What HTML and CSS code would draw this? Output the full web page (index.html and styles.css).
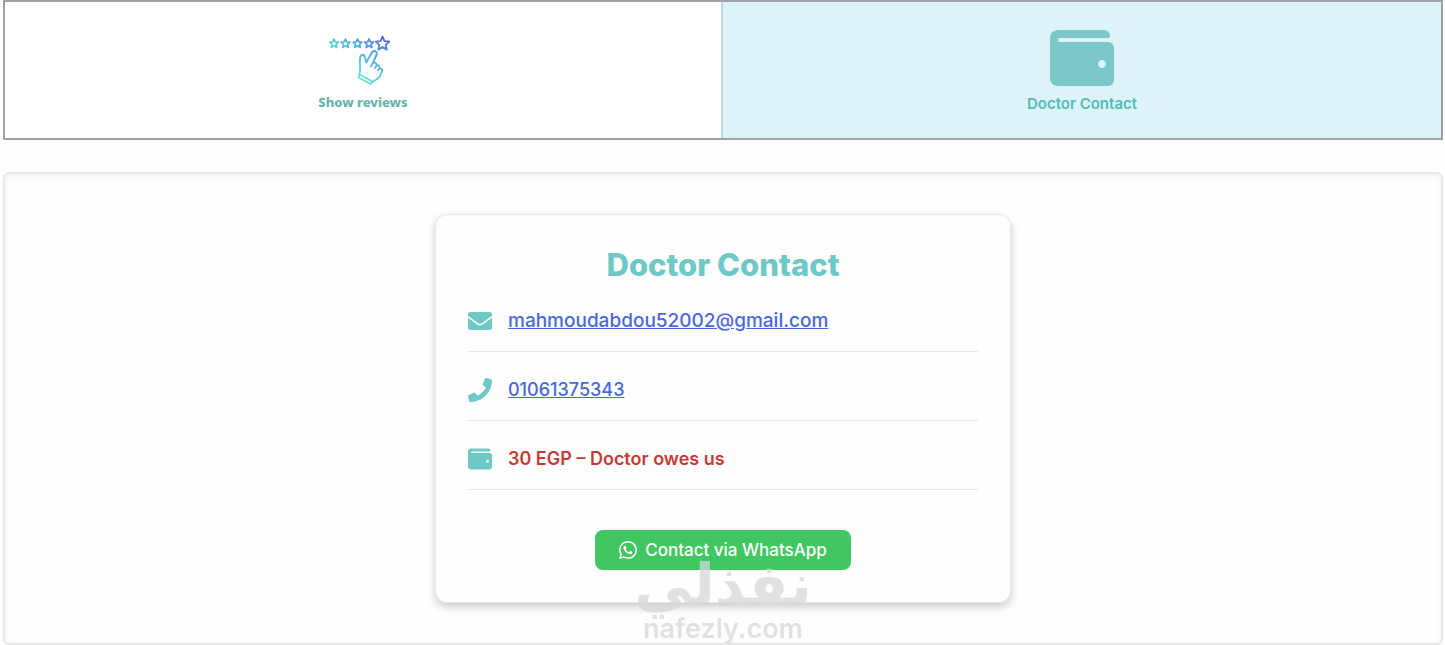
FILE: index.html
```html
<!DOCTYPE html>
<html lang="en">
<head>
    <meta charset="UTF-8">
    <meta name="viewport" content="width=device-width, initial-scale=1.0">
    <title>Doctor Contact</title>
    <link rel="stylesheet" href="styles.css">
</head>
<body>
    <nav class="tabs">
        <button type="button" class="tab tab-reviews">
            <svg class="tab-icon" viewBox="2 0 64 64" fill="none" stroke="url(#reviewGradient)" stroke-linejoin="round" stroke-linecap="round" aria-hidden="true">
                <defs>
                    <linearGradient id="reviewGradient" gradientUnits="userSpaceOnUse" x1="56" y1="10" x2="24" y2="50">
                        <stop offset="0" stop-color="#4a63dc"/>
                        <stop offset="0.5" stop-color="#55b4dc"/>
                        <stop offset="1" stop-color="#6aeed0"/>
                    </linearGradient>
                </defs>
                <path stroke-width="1.7" d="M5 11 6.3 13.9 9.4 14.2 7.1 16.3 7.8 19.4 5 17.8 2.2 19.4 2.9 16.3.6 14.2 3.7 13.9Z"/>
                <path stroke-width="1.7" d="M16.5 11 17.8 13.9 20.9 14.2 18.6 16.3 19.3 19.4 16.5 17.8 13.7 19.4 14.4 16.3 12.1 14.2 15.2 13.9Z"/>
                <path stroke-width="1.7" d="M28.5 11 29.8 13.9 32.9 14.2 30.6 16.3 31.3 19.4 28.5 17.8 25.7 19.4 26.4 16.3 24.1 14.2 27.2 13.9Z"/>
                <path stroke-width="1.7" d="M40 11 41.3 13.9 44.4 14.2 42.1 16.3 42.8 19.4 40 17.8 37.2 19.4 37.9 16.3 35.6 14.2 38.7 13.9Z"/>
                <path stroke-width="1.8" d="M53.5 8.6 55.5 13.1 60.3 13.6 56.7 16.8 57.8 21.6 53.5 19.1 49.2 21.6 50.3 16.8 46.7 13.6 51.5 13.1Z"/>
                <path stroke-width="1.8" d="M30.5 46.5C32 41 30.500 37 31 30.500 31.200 26 35 25.500 36 29.500L37.300 34.500 42.500 25C44.500 21.500 49 23 47.500 27L43.500 35.500C45.500 33.500 48 35 47.500 37.500 49.500 36.500 51 38.500 50.300 40.500 52.500 40 54 41.500 53 43.500L50.500 49 44.500 53.500M43.500 35.500 42 38.500M47.500 37.500 46 40M50.300 40.500 49 42.500M30.200 46.500 43.500 53.500 41.800 56 29.500 49.500Z"/>
            </svg>
            <span>Show reviews</span>
        </button>
        <button type="button" class="tab tab-contact">
            <svg class="tab-icon" viewBox="0 0 512 512" fill="currentColor" aria-hidden="true">
                <path d="M461.200 128H80c-8.840 0-16-7.160-16-16s7.160-16 16-16h384c8.840 0 16-7.160 16-16 0-26.510-21.490-48-48-48H64C28.650 32 0 60.650 0 96v320c0 35.350 28.650 64 64 64h397.200c28.020 0 50.800-21.530 50.800-48V176c0-26.470-22.780-48-50.800-48zM416 336c-17.670 0-32-14.330-32-32s14.330-32 32-32 32 14.330 32 32-14.330 32-32 32z"/>
            </svg>
            <span>Doctor Contact</span>
        </button>
    </nav>

    <main class="panel">
        <section class="card">
            <h1>Doctor Contact</h1>
            <ul class="contact-list">
                <li>
                    <svg class="row-icon" viewBox="0 0 512 512" fill="currentColor" aria-hidden="true">
                        <path d="M502.300 190.800c3.900-3.100 9.700-.2 9.700 4.700V400c0 26.500-21.500 48-48 48H48c-26.500 0-48-21.500-48-48V195.600c0-5 5.700-7.800 9.700-4.700 22.400 17.400 52.100 39.500 154.100 113.600 21.100 15.400 56.700 47.800 92.200 47.600 35.700.3 72-32.800 92.300-47.600 102-74.100 131.600-96.300 154-113.700zM256 320c23.200.4 56.600-29.200 73.400-41.400 132.700-96.300 142.800-104.700 173.400-128.700 5.800-4.500 9.200-11.500 9.200-18.900v-19c0-26.500-21.500-48-48-48H48c-26.500 0-48 21.500-48 48v19c0 7.400 3.400 14.300 9.200 18.900 30.600 23.900 40.700 32.400 173.400 128.700 16.800 12.200 50.200 41.800 73.400 41.400z"/>
                    </svg>
                    <a class="email" href="mailto:mahmoudabdou52002@gmail.com">mahmoudabdou52002@gmail.com</a>
                </li>
                <li>
                    <svg class="row-icon" viewBox="0 0 512 512" fill="currentColor" aria-hidden="true">
                        <path d="M493.400 24.600l-104-24c-11.300-2.600-22.900 3.300-27.500 13.900l-48 112c-4.200 9.800-1.400 21.300 6.900 28l60.600 49.600c-36 76.700-98.900 140.500-177.200 177.200l-49.600-60.600c-6.800-8.300-18.200-11.100-28-6.900l-112 48C3.900 366.500-2 378.100.6 389.400l24 104C27.100 504.200 36.700 512 48 512c256.100 0 464-207.500 464-464 0-11.200-7.700-20.900-18.600-23.400z"/>
                    </svg>
                    <a href="tel:01061375343">01061375343</a>
                </li>
                <li>
                    <svg class="row-icon" viewBox="0 0 512 512" fill="currentColor" aria-hidden="true">
                        <path d="M461.200 128H80c-8.840 0-16-7.160-16-16s7.160-16 16-16h384c8.840 0 16-7.160 16-16 0-26.510-21.490-48-48-48H64C28.650 32 0 60.650 0 96v320c0 35.350 28.650 64 64 64h397.200c28.020 0 50.800-21.530 50.800-48V176c0-26.470-22.780-48-50.800-48zM416 336c-17.670 0-32-14.330-32-32s14.330-32 32-32 32 14.330 32 32-14.330 32-32 32z"/>
                    </svg>
                    <span class="balance">30 EGP – Doctor owes us</span>
                </li>
            </ul>
            <button type="button" class="whatsapp">
                <svg class="whatsapp-icon" viewBox="0 32 448 448" fill="currentColor" aria-hidden="true">
                    <path d="M380.900 97.100C339 55.100 283.200 32 223.900 32c-122.400 0-222 99.600-222 222 0 39.100 10.200 77.300 29.600 111L0 480l117.700-30.900c32.400 17.700 68.900 27 106.100 27h.1c122.300 0 224.100-99.600 224.100-222 0-59.300-25.200-115-67.100-157zm-157 341.600c-33.200 0-65.700-8.900-94-25.700l-6.700-4-69.800 18.300L72 359.200l-4.400-7c-18.500-29.400-28.200-63.300-28.200-98.200 0-101.700 82.800-184.500 184.600-184.500 49.300 0 95.600 19.200 130.400 54.100 34.800 34.900 56.200 81.200 56.100 130.500 0 101.800-84.900 184.600-186.600 184.600zm101.200-138.200c-5.500-2.800-32.800-16.200-37.900-18-5.100-1.900-8.800-2.800-12.500 2.800-3.700 5.600-14.300 18-17.600 21.800-3.200 3.700-6.500 4.200-12 1.400-32.600-16.300-54-29.100-75.500-66-5.700-9.800 5.700-9.100 16.300-30.300 1.800-3.700.9-6.900-.5-9.700-1.400-2.800-12.500-30.100-17.100-41.200-4.500-10.800-9.100-9.300-12.500-9.500-3.200-.2-6.900-.2-10.600-.2-3.700 0-9.700 1.400-14.800 6.900-5.100 5.600-19.400 19-19.400 46.300 0 27.300 19.900 53.700 22.600 57.400 2.800 3.700 39.100 59.700 94.800 83.800 35.200 15.200 49 16.500 66.600 13.900 10.700-1.600 32.800-13.400 37.400-26.400 4.600-13 4.600-24.100 3.200-26.400-1.300-2.500-5-3.900-10.500-6.600z"/>
                </svg>
                Contact via WhatsApp
            </button>
        </section>

        <div class="watermark">
            <span class="watermark-ar" lang="ar" dir="rtl">نفذلي</span>
            <span class="watermark-en">nafezly.com</span>
        </div>
    </main>
</body>
</html>
```

FILE: styles.css
```css
* {
    box-sizing: border-box;
}

body {
    margin: 0 2px 0 3px;
    background-color: #fefefe;
    font-family: Inter, "Open Sans", sans-serif;
}

button {
    font-family: inherit;
    cursor: pointer;
}

/* Tabs */
.tabs {
    display: grid;
    grid-template-columns: 1fr 1fr;
    margin-bottom: 32px;
    border: 2px solid #9ca3a8;
}

.tab {
    display: flex;
    flex-direction: column;
    align-items: center;
    justify-content: center;
    gap: 4px;
    padding: 24px;
    border: none;
    background-color: #fff;
    font-size: 15px;
    font-weight: 600;
    line-height: 20px;
}

.tab-icon {
    width: 64px;
    height: 64px;
    overflow: visible;
}

.tab-reviews {
    gap: 0;
    border-right: 2px solid #c3d5d6;
    color: #68b3aa;
    font-family: "Noto Sans", sans-serif;
    font-size: 13px;
    font-weight: 800;
}

.tab-contact {
    background-color: #dcf3f7;
    color: #7ac8ca;
}

.tab-contact span {
    color: #52bdb6;
}

/* Content panel */
.panel {
    position: relative;
    padding: 40px 16px;
    border: 2px solid #e8e8e8;
    border-radius: 6px;
    box-shadow: inset 0 2px 6px rgba(0, 0, 0, 0.06);
}

.card {
    max-width: 576px;
    margin: 0 auto;
    padding: 32px;
    border: 1px solid #e5e7eb;
    border-radius: 12px;
    background-color: #fefefe;
    box-shadow: 0 4px 8px rgba(0, 0, 0, 0.2);
}

h1 {
    margin: 0 0 24px;
    color: #6cc9c5;
    font-size: 31px;
    font-weight: 800;
    line-height: 36px;
    text-align: center;
}

/* Contact rows */
.contact-list {
    display: flex;
    flex-direction: column;
    gap: 24px;
    margin: 0 0 40px;
    padding: 0;
    list-style: none;
}

.contact-list li {
    display: flex;
    align-items: center;
    gap: 16px;
    padding-bottom: 16px;
    border-bottom: 1px solid #e5e7eb;
    font-size: 18px;
    font-weight: 500;
    line-height: 28px;
}

.contact-list a {
    color: #4868dc;
    text-decoration: underline;
}

.contact-list .email {
    font-size: 19px;
}

.row-icon {
    width: 24px;
    height: 24px;
    color: #6cc9c5;
}

.balance {
    color: #c93a35;
    font-weight: 600;
}

/* WhatsApp button */
.whatsapp {
    display: flex;
    align-items: center;
    gap: 8px;
    margin: 0 auto;
    padding: 8px 24px;
    border: none;
    border-radius: 8px;
    background-color: #40c762;
    color: #fff;
    font-size: 17px;
    font-weight: 500;
    line-height: 24px;
}

.whatsapp-icon {
    width: 18px;
    height: 18px;
}

/* Watermark */
.watermark {
    position: absolute;
    right: 0;
    bottom: 0;
    left: 0;
    display: flex;
    flex-direction: column;
    align-items: center;
    color: rgba(215, 215, 219, 0.75);
    font-weight: 700;
    pointer-events: none;
}

.watermark-ar {
    font-family: "DejaVu Sans", sans-serif;
    font-size: 58px;
    line-height: 60px;
}

.watermark-en {
    font-size: 27px;
    font-weight: 600;
    line-height: 28px;
}
```
